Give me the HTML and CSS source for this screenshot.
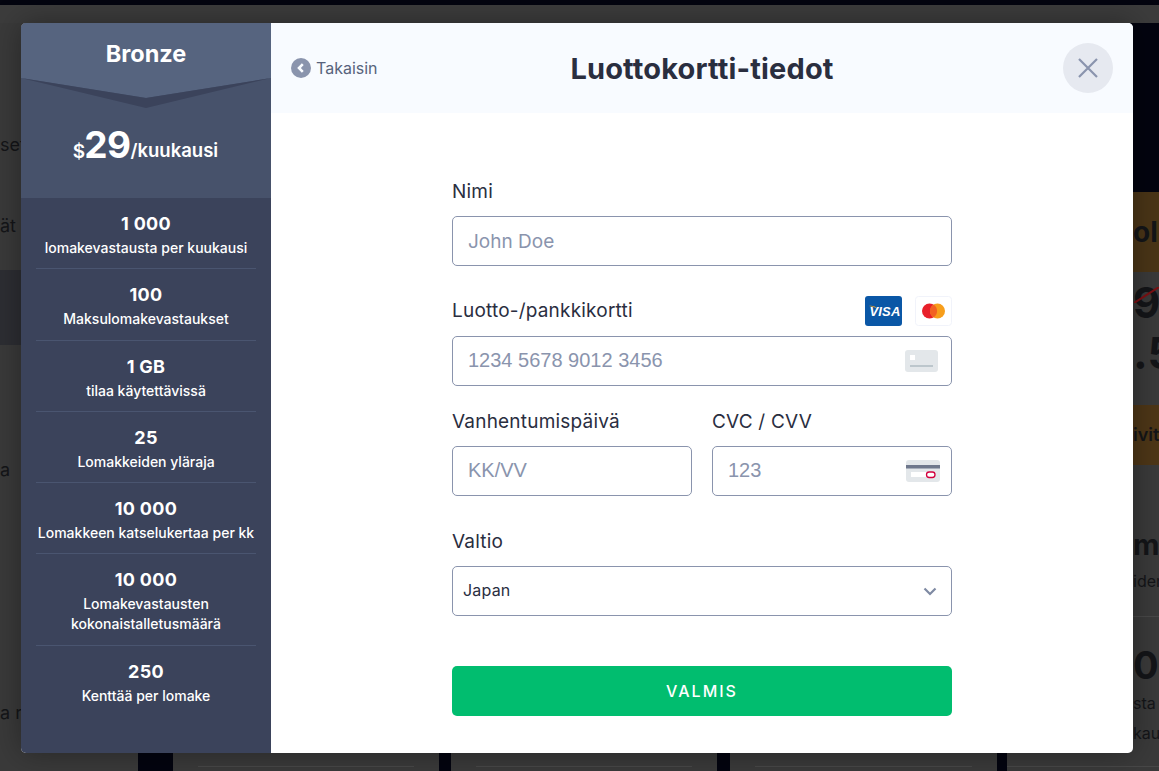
FILE: index.html
```html
<!DOCTYPE html>
<html lang="fi">
<head>
    <meta charset="UTF-8">
    <title>Luottokortti-tiedot</title>
    <meta name="viewport" content="width=device-width, initial-scale=1.0">
    <link rel="stylesheet" href="styles.css">
</head>
<body>
    <div class="page">
        <div class="top-strip"></div>
        <div class="top-band"></div>
        <div class="columns">
            <div class="col col-left">
                <p class="left-row left-a">set</p>
                <p class="left-row left-b">ät</p>
                <div class="left-active"></div>
                <p class="left-row left-c">a</p>
                <p class="left-row left-d">a ra</p>
            </div>
            <div class="col col-plan col-1"><div class="col-line"></div></div>
            <div class="col col-plan col-2"><div class="col-line"></div></div>
            <div class="col col-plan col-3"><div class="col-line"></div></div>
            <div class="col col-right">
                <div class="right-gap"></div>
                <div class="gold-head">ol</div>
                <div class="old-price">9,
                    <svg class="strike" width="25" height="16" viewBox="0 0 25 16">
                        <path d="M0 16 25 0" stroke="#7c1013" stroke-width="2"/>
                    </svg>
                </div>
                <div class="new-price">.5</div>
                <div class="gold-btn">ivit</div>
                <div class="right-big">ma</div>
                <div class="right-small">iden</div>
                <div class="right-sep"></div>
                <div class="right-big right-big2">00</div>
                <div class="right-small right-small2">sta</div>
                <div class="right-small right-small3">kau</div>
                <div class="col-line"></div>
            </div>
        </div>
    </div>

    <div class="modal">
        <aside class="plan">
            <div class="plan-name">Bronze</div>
            <svg class="plan-fold" width="250" height="30" viewBox="0 0 250 30">
                <polygon points="0,0 250,0 125,20" fill="#56647f"/>
                <polygon points="0,0 125,20 250,0 125,30" fill="#3b435b"/>
            </svg>
            <div class="plan-price">
                <span class="price-cur">$</span><span class="price-num">29</span><span class="price-per">/kuukausi</span>
            </div>
            <ul class="limits">
                <li><b>1 000</b><span>lomakevastausta per kuukausi</span></li>
                <li><b>100</b><span>Maksulomakevastaukset</span></li>
                <li><b>1 GB</b><span>tilaa käytettävissä</span></li>
                <li><b>25</b><span>Lomakkeiden yläraja</span></li>
                <li><b>10 000</b><span>Lomakkeen katselukertaa per kk</span></li>
                <li><b>10 000</b><span>Lomakevastausten<br>kokonaistalletusmäärä</span></li>
                <li><b>250</b><span>Kenttää per lomake</span></li>
            </ul>
        </aside>
        <main class="pay">
            <header class="pay-head">
                <a class="back" href="#">
                    <svg width="20" height="20" viewBox="0 0 20 20">
                        <circle cx="10" cy="10" r="10" fill="#8a94ad"/>
                        <path d="M11.8 6.200 8 10l3.800 3.800" fill="none" stroke="#f8fbff" stroke-width="2.600"/>
                    </svg>
                    Takaisin
                </a>
                <h1>Luottokortti-tiedot</h1>
                <button class="close" aria-label="Sulje">
                    <svg width="22" height="22" viewBox="0 0 22 22">
                        <path d="M2 2l18 18M20 2 2 20" fill="none" stroke="#8a94ad" stroke-width="2.200"/>
                    </svg>
                </button>
            </header>
            <form class="pay-form">
                <div class="field">
                    <label>Nimi</label>
                    <div class="box"><span class="ph">John Doe</span></div>
                </div>
                <div class="field">
                    <label class="label-cards">Luotto-/pankkikortti
                        <span class="cards">
                            <svg width="37" height="30" viewBox="0 0 37 30">
                                <rect width="37" height="30" rx="3" fill="#0a57a6"/>
                                <path d="M4 10c3.500-.6 6.500.4 8.500 3-2-1.600-5-2.600-8.500-3z" fill="#f2a51f"/>
                                <text x="20" y="20" class="visa-text" text-anchor="middle">VISA</text>
                            </svg>
                            <svg width="37" height="30" viewBox="0 0 37 30">
                                <rect x=".5" y=".5" width="36" height="29" rx="3" fill="#fff" stroke="#f1f3fa"/>
                                <circle cx="14.500" cy="15" r="7.500" fill="#e8202a"/>
                                <circle cx="22.500" cy="15" r="7.500" fill="#f79e1b"/>
                                <path d="M18.500 8.600a7.500 7.500 0 0 1 0 12.800 7.500 7.500 0 0 1 0-12.800z" fill="#f26122"/>
                            </svg>
                        </span>
                    </label>
                    <div class="box">
                        <span class="ph ph-num">1234 5678 9012 3456</span>
                        <svg class="box-icon" width="33" height="22" viewBox="0 0 33 22">
                            <rect width="33" height="22" rx="3" fill="#e3e7ea"/>
                            <rect x="5" y="5" width="5" height="5" fill="#fff"/>
                            <rect x="5" y="15" width="23" height="2" fill="#bcc6cc"/>
                        </svg>
                    </div>
                </div>
                <div class="field field-row">
                    <div class="half">
                        <label>Vanhentumispäivä</label>
                        <div class="box"><span class="ph ph-num">KK/VV</span></div>
                    </div>
                    <div class="half">
                        <label>CVC / CVV</label>
                        <div class="box box-cvc">
                            <span class="ph ph-num">123</span>
                            <svg class="box-icon" width="34" height="22" viewBox="0 0 34 22">
                                <rect width="34" height="22" rx="3" fill="#e3e7ea"/>
                                <rect y="5" width="34" height="3.500" fill="#6f788c"/>
                                <rect x="5" y="12" width="24" height="5" fill="#fff"/>
                                <rect x="20.500" y="12" width="8.500" height="5.500" rx="2.700" fill="#fff" stroke="#d3003f" stroke-width="1.300"/>
                            </svg>
                        </div>
                    </div>
                </div>
                <div class="field">
                    <label>Valtio</label>
                    <div class="box box-select">
                        <span class="select-value">Japan</span>
                        <svg width="14" height="9" viewBox="0 0 14 9">
                            <path d="M1.500 1.500 7 7l5.500-5.500" fill="none" stroke="#7f8aa3" stroke-width="2.200"/>
                        </svg>
                    </div>
                </div>
                <button class="submit" type="button">VALMIS</button>
            </form>
        </main>
    </div>
</body>
</html>
```

FILE: styles.css
```css
* { box-sizing: border-box; }

html, body { height: 100%; }

body {
    margin: 0;
    font-family: Inter, "Noto Sans", sans-serif;
    background-color: #03040f;
    overflow: hidden;
}

p { margin: 0; }

/* dimmed page behind the dialog */
.page { height: 771px; overflow: hidden; color: #141518; }
.top-strip { height: 5px; }
.top-band { height: 18px; background-color: #3c3c3c; }

.columns { display: flex; height: 748px; }

.col { flex-shrink: 0; background-color: #3a3a3a; }
.col-left { width: 138px; }
.col-plan { display: flex; flex-direction: column; justify-content: flex-end; width: 266px; padding: 0 25px 4px; }
.col-1 { margin-left: 35px; }
.col-2 { margin-left: 12px; }
.col-3 { margin-left: 13px; width: 267px; }
.col-line { height: 1px; background-color: #484848; }

.left-row { font-size: 18px; line-height: 24px; white-space: nowrap; }
.left-a { padding-top: 110px; }
.left-b { padding-top: 57px; }
.left-active { height: 75px; margin-top: 32px; background-color: #2d2e33; }
.left-c { padding-top: 113px; }
.left-d { padding-top: 219px; }

.col-right { width: 152px; margin-left: 10px; }
.col-right > div { padding-left: 126px; white-space: nowrap; overflow: hidden; }
.right-gap { height: 169px; background-color: #03040f; }
.gold-head { height: 80px; line-height: 80px; background-color: #4a3517; font-size: 28px; font-weight: 700; }
.col-right > .old-price { position: relative; height: 50px; line-height: 62px; font-size: 42px; font-weight: 700; }
.strike { position: absolute; left: 127px; top: 15px; }
.new-price { height: 83px; line-height: 62px; font-size: 44px; font-weight: 700; }
.gold-btn { height: 60px; line-height: 60px; background-color: #4d3617; font-size: 18px; font-weight: 600; }
.right-big { margin-top: 60px; font-size: 29px; line-height: 40px; font-weight: 700; }
.right-small { font-size: 16px; line-height: 30px; margin-top: 1px; }
.col-right > .right-sep { height: 1px; margin-top: 20px; padding: 0; background-color: #484848; }
.right-big2 { margin-top: 28px; font-size: 38px; }
.right-small2 { margin-top: 3px; }
.right-small3 { margin-top: 0; }
.col-right > .col-line { padding: 0; margin-top: 18px; }

/* dialog */
.modal {
    position: absolute;
    top: 23px;
    left: 21px;
    width: 1112px;
    height: 730px;
    display: flex;
    background-color: white;
    border-radius: 5px;
    overflow: hidden;
    box-shadow: 0 0 30px rgba(0, 0, 0, 0.35);
}

.plan {
    width: 250px;
    flex-shrink: 0;
    color: white;
    background-color: #3b435b;
    text-align: center;
}

.plan-name {
    height: 55px;
    padding-top: 14px;
    font-size: 23.5px;
    line-height: 34px;
    font-weight: 700;
    background-color: #56647f;
}

.plan-fold { display: block; background-color: #47526b; }

.plan-price {
    height: 90px;
    padding-top: 12px;
    padding-right: 1px;
    line-height: 50px;
    background-color: #47526b;
}

.price-cur { font-size: 19px; font-weight: 600; letter-spacing: -1px; }
.price-num { font-size: 37px; font-weight: 700; letter-spacing: -0.5px; }
.price-per { font-size: 18.5px; font-weight: 600; position: relative; top: -1px; }

.limits { list-style: none; margin: 0; padding: 0 15px; }

.limits li {
    padding: 14px 0 10.25px;
    border-bottom: 1px solid #4a5570;
}

.limits li:last-child { border-bottom: none; }

.limits b {
    display: block;
    font-size: 18px;
    line-height: 24px;
    font-weight: 700;
    letter-spacing: 0.3px;
}

.limits span {
    display: block;
    font-size: 14px;
    line-height: 20px;
    font-weight: 500;
    margin-top: 2px;
}

.pay { flex: 1; }

.pay-head {
    height: 90px;
    display: grid;
    grid-template-columns: 1fr auto 1fr;
    align-items: center;
    padding: 0 20px;
    background-color: #f8fbff;
}

.back {
    display: flex;
    align-items: center;
    gap: 5px;
    font-size: 16px;
    color: #57637c;
    text-decoration: none;
}

.pay-head h1 {
    margin: 0;
    font-size: 29px;
    font-weight: 700;
    letter-spacing: 0.15px;
    color: #2a2e3f;
}

.close {
    width: 50px;
    height: 50px;
    display: flex;
    align-items: center;
    justify-content: center;
    justify-self: end;
    padding: 0;
    border: none;
    border-radius: 50%;
    background-color: #e6e9f0;
}

.pay-form { width: 500px; margin-left: 181px; padding-top: 63px; }

.field { margin-bottom: 30px; }
.field-row { display: flex; gap: 20px; margin-top: -10px; }
.half { width: 240px; }

.field label {
    display: block;
    height: 30px;
    margin-bottom: 10px;
    font-size: 19px;
    line-height: 32px;
    letter-spacing: 0.2px;
    color: #2a2e3f;
}

.field .label-cards { display: flex; align-items: center; justify-content: space-between; }
.cards { display: flex; gap: 13px; }
.visa-text { font-family: "Liberation Sans", sans-serif; font-size: 13px; font-weight: 700; font-style: italic; fill: white; }

.box {
    height: 50px;
    display: flex;
    align-items: center;
    justify-content: space-between;
    padding: 0 13px 0 15px;
    border: 1px solid #8a94ad;
    border-radius: 5px;
    background-color: white;
}

.ph { font-size: 19px; color: #8a94ad; }
.ph-num { font-family: "Liberation Sans", Arial, sans-serif; font-size: 20px; padding-bottom: 2px; }
.box-cvc { padding-right: 11px; }
.box-select { padding: 0 14px 0 10px; }
.select-value { font-size: 16px; letter-spacing: 0.2px; padding-bottom: 2px; color: #2a2e3f; }

.submit {
    display: block;
    width: 100%;
    height: 50px;
    margin-top: 50px;
    border: none;
    border-radius: 5px;
    font-family: inherit;
    font-size: 16px;
    font-weight: 500;
    letter-spacing: 2px;
    color: white;
    background-color: #01bd6f;
}
```
